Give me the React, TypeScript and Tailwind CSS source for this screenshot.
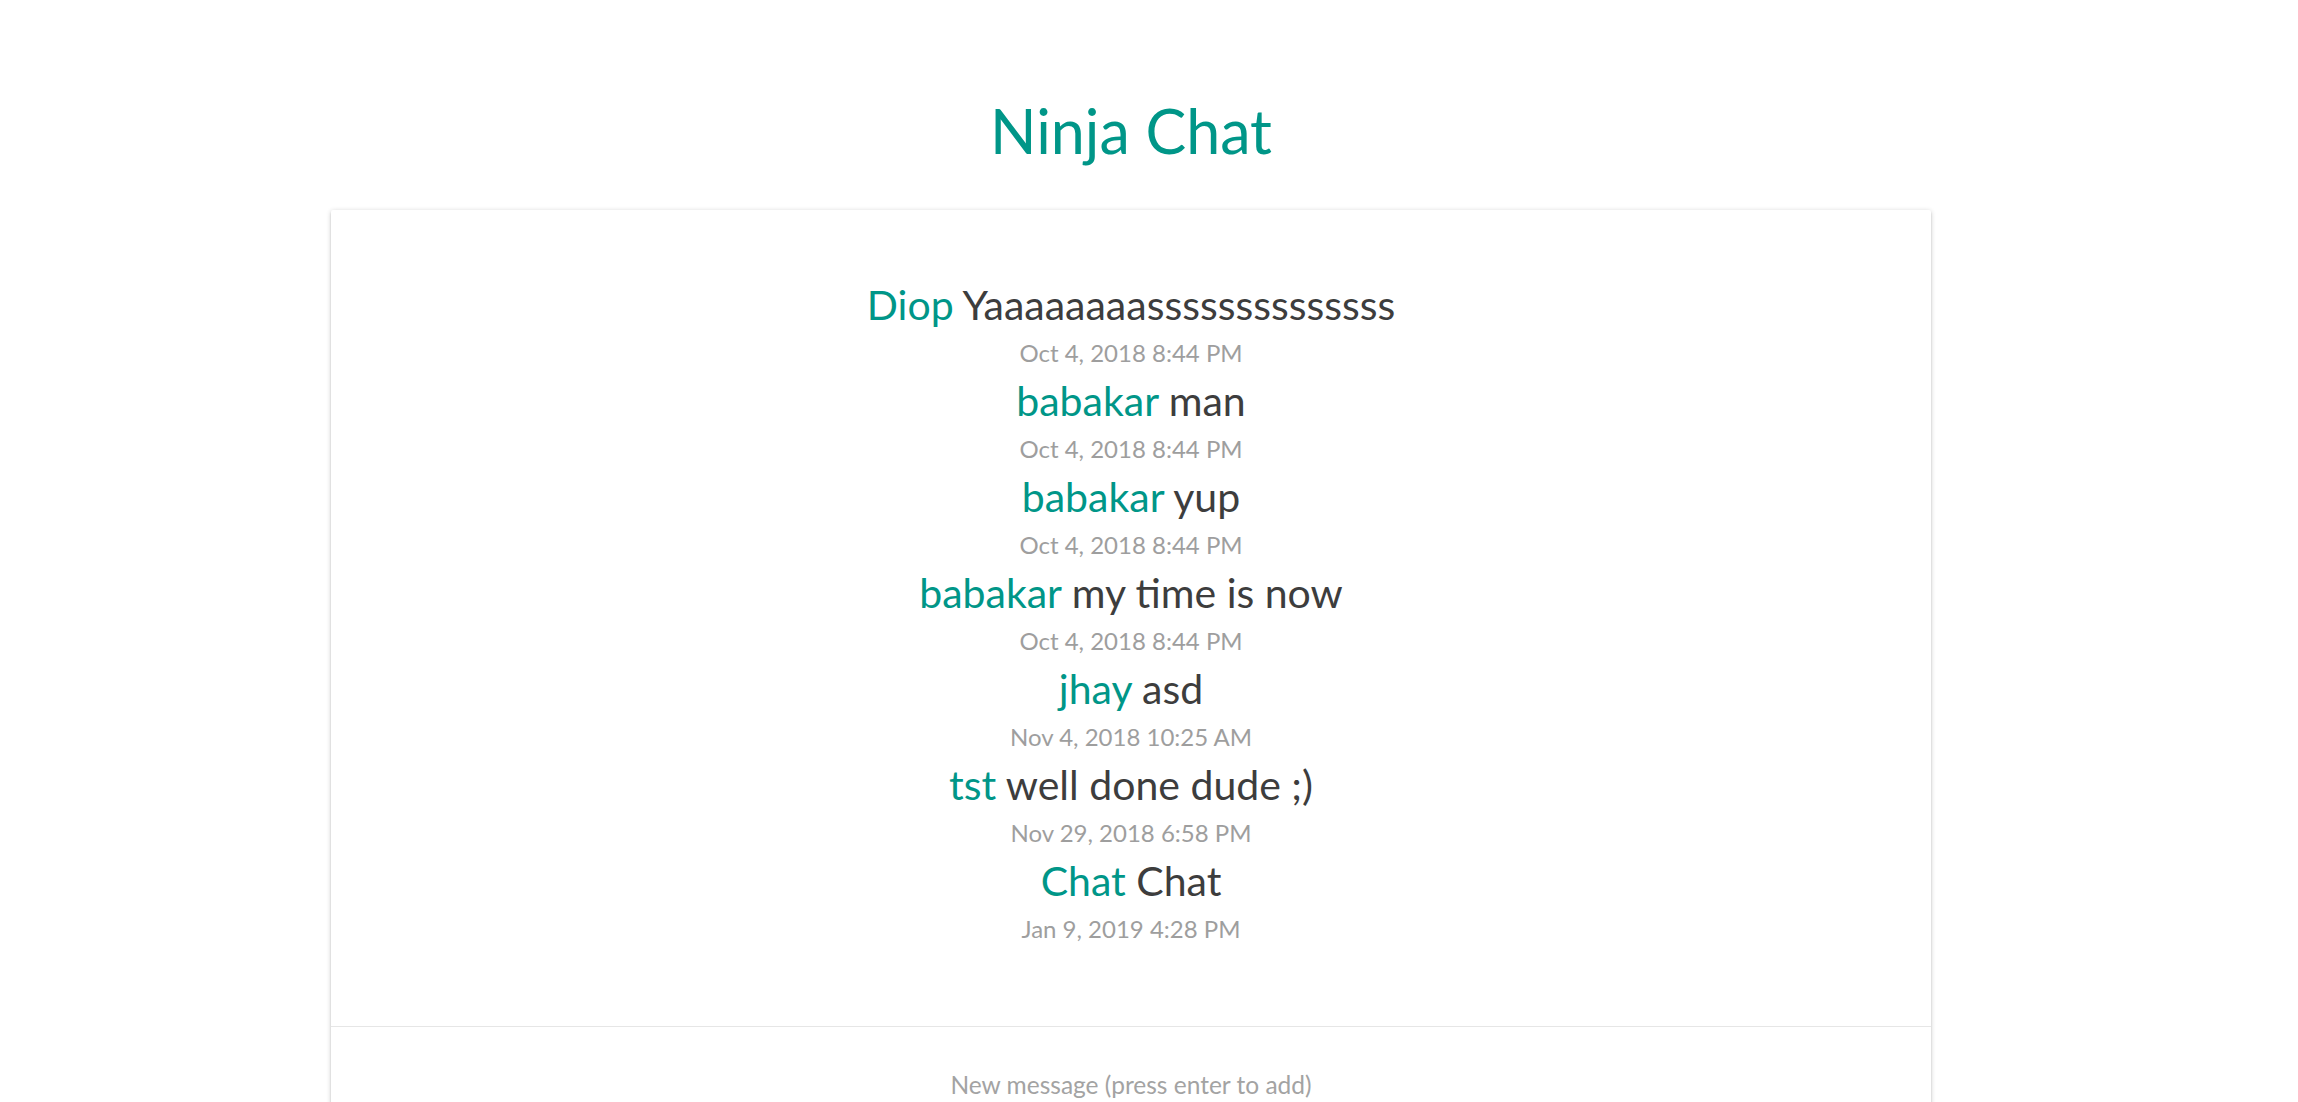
const messages = [
  { name: "Diop", content: "Yaaaaaaaassssssssssssss", time: "Oct 4, 2018 8:44 PM" },
  { name: "babakar", content: "man", time: "Oct 4, 2018 8:44 PM" },
  { name: "babakar", content: "yup", time: "Oct 4, 2018 8:44 PM" },
  { name: "babakar", content: "my time is now", time: "Oct 4, 2018 8:44 PM" },
  { name: "jhay", content: "asd", time: "Nov 4, 2018 10:25 AM" },
  { name: "tst", content: "well done dude ;)", time: "Nov 29, 2018 6:58 PM" },
  { name: "Chat", content: "Chat", time: "Jan 9, 2019 4:28 PM" },
];

export default function App() {
  return (
    <div className="min-h-screen bg-white font-['Lato','Liberation_Sans',sans-serif]">
      <div className="w-[2262px] pt-[88px]">
        <h2 className="text-center text-[61px] leading-[86px] text-[#009688] mb-[36px]">Ninja Chat</h2>
        <div className="mx-auto w-[1600px] bg-white rounded-[2px] shadow-[0_2px_2px_0_rgba(0,0,0,0.14),0_3px_1px_-2px_rgba(0,0,0,0.12),0_1px_5px_0_rgba(0,0,0,0.2)]">
          <ul className="pt-[71px] pb-[73px] text-center">
            {messages.map((m, i) => (
              <li key={i}>
                <div className="text-[41px] leading-[48px]">
                  <span className="text-[#009688]">{m.name}</span>{" "}
                  <span className="text-[#3d3d3d]">{m.content}</span>
                </div>
                <div className="text-[24px] leading-[48px] text-[#9e9e9e]">{m.time}</div>
              </li>
            ))}
          </ul>
          <div className="border-t border-[#e6e6e6] px-[40px] pt-[40px] pb-[60px]">
            <input
              type="text"
              placeholder="New message (press enter to add)"
              className="w-full text-center text-[24.5px] leading-[36px] outline-none placeholder:text-[#a3a3a3] border-b border-[#9e9e9e]"
            />
          </div>
        </div>
      </div>
    </div>
  );
}
